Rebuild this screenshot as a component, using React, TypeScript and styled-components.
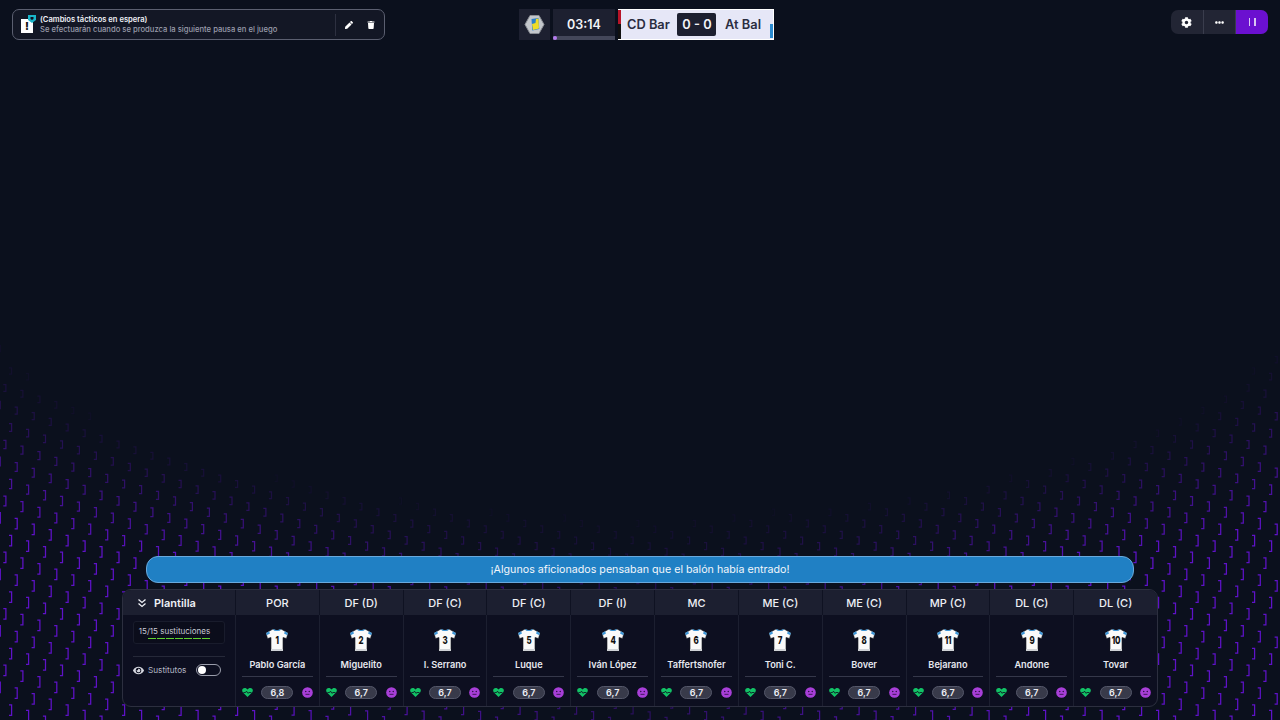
import React from 'react';
import styled, { createGlobalStyle } from 'styled-components';
import { FaCog, FaEllipsisH, FaEye, FaPen, FaTrash } from 'react-icons/fa';

const GlobalStyle = createGlobalStyle`
  html, body {
    margin: 0;
    padding: 0;
    height: 100%;
    background: #0b101d;
    overflow: hidden;
  }
  body, button {
    font-family: Inter, "Liberation Sans", sans-serif;
  }
`;

const Page = styled.div`
  position: relative;
  width: 1280px;
  height: 720px;
  display: flex;
  flex-direction: column;
  justify-content: space-between;
  background: #0b101d;
  color: #eceef4;
  overflow: hidden;
`;

const PatternLayer = styled.svg`
  position: absolute;
  inset: 0;
  width: 100%;
  height: 100%;
`;

const TopBar = styled.header`
  position: relative;
  display: grid;
  grid-template-columns: 507px 255px 1fr;
  align-items: start;
  padding: 9px 12px 0;
`;

const Notice = styled.div`
  width: 373px;
  height: 31px;
  box-sizing: border-box;
  display: flex;
  align-items: center;
  border: 1px solid #5b5f70;
  border-radius: 7px;
  background: #131725;
  padding: 0 0 0 8px;
`;

const NoticeIcon = styled.div`
  position: relative;
  flex: none;
  width: 12px;
  height: 14px;
  margin-top: 2px;
  margin-right: 7px;
  background: #fff;
  color: #111;
  font-size: 11px;
  line-height: 14px;
  font-weight: 800;
  text-align: center;
`;

const NoticeBadge = styled.svg`
  position: absolute;
  top: -4px;
  right: -3px;
  width: 8px;
  height: 8px;
`;

const NoticeText = styled.div`
  flex: 1;
  display: flex;
  flex-direction: column;
`;

const NoticeTitle = styled.div`
  font-size: 7.6px;
  line-height: 10px;
  font-weight: 600;
  color: #f0f1f6;
`;

const NoticeSub = styled.div`
  font-size: 7.65px;
  line-height: 10px;
  font-weight: 500;
  color: #9a9dab;
`;

const NoticeActions = styled.div`
  display: flex;
  align-items: center;
  height: 22px;
  border-left: 1px solid #2d3040;
  gap: 14px;
  padding: 0 9px 0 9px;
  color: #fff;
  font-size: 8px;
`;

const Score = styled.div`
  display: flex;
  height: 31px;
  gap: 3px;
`;

const LogoBox = styled.div`
  width: 31px;
  display: flex;
  align-items: center;
  justify-content: center;
  background: #1d2030;
`;

const ClockBox = styled.div`
  position: relative;
  width: 62px;
  display: flex;
  align-items: center;
  justify-content: center;
  padding-bottom: 1px;
  box-sizing: border-box;
  background: #1d2030;
  font-size: 12.5px;
  font-weight: 600;
  color: #f2f3f8;
`;

const ClockTrack = styled.div`
  position: absolute;
  left: 0;
  right: 0;
  bottom: 0;
  height: 4px;
  background: #44475a;
`;

const ClockThumb = styled.div`
  width: 4px;
  height: 4px;
  border-radius: 50%;
  background: #b57bf0;
`;

const Teams = styled.div`
  position: relative;
  flex: 1;
  display: flex;
  align-items: center;
  justify-content: space-between;
  padding: 0 12px 0 9px;
  background: #e6e7f7;
  color: #2a2d40;
  font-size: 12.8px;
  font-weight: 600;
  border: 1px solid #fff;
  border-left: 0;
  box-sizing: border-box;
`;

const TeamStripe = styled.div<{ $side: 'left' | 'right' }>`
  position: absolute;
  ${p => (p.$side === 'left'
    ? 'left: 0; top: 0; bottom: 0; width: 3px; background: linear-gradient(#b81428 0 50%, #111 50%);'
    : 'right: 0; bottom: 1px; width: 3px; height: 14px; background: #2a8ad0;')}
`;

const ScoreBox = styled.div`
  width: 39px;
  height: 23px;
  margin-left: -1px;
  display: flex;
  align-items: center;
  justify-content: center;
  background: #1d2030;
  color: #f2f3f8;
  border-radius: 2px;
`;

const Controls = styled.div`
  justify-self: end;
  display: flex;
  height: 24px;
  margin-top: 1px;
  border-radius: 7px;
  overflow: hidden;
  background: #222534;
`;

const ControlButton = styled.button<{ $primary?: boolean }>`
  width: ${p => (p.$primary ? '32px' : '32.5px')};
  padding: 0;
  border: 0;
  border-right: ${p => (p.$primary ? '0' : '1px solid #3a3d4d')};
  display: flex;
  align-items: center;
  justify-content: center;
  gap: 4px;
  color: #fff;
  font-size: 11px;
  background: ${p => (p.$primary ? '#6b10d0' : 'transparent')};
`;

const PauseBar = styled.span`
  width: 1.5px;
  height: 8px;
  background: #d9c6f2;
`;

const Bottom = styled.footer`
  position: relative;
  display: flex;
  flex-direction: column;
  align-items: center;
  gap: 6px;
  padding-bottom: 13px;
`;

const Message = styled.div`
  width: 988px;
  height: 27px;
  box-sizing: border-box;
  display: flex;
  align-items: center;
  justify-content: center;
  border: 1px solid #69a9dc;
  border-radius: 12px;
  background: #2080c4;
  color: #f2f6fb;
  font-size: 10.7px;
`;

const Panel = styled.section`
  width: 1036px;
  height: 118px;
  box-sizing: border-box;
  display: grid;
  grid-template-columns: 112px repeat(11, 1fr);
  grid-template-rows: 25px 1fr;
  border: 1px solid #2c2f3f;
  border-radius: 9px;
  background: #0d0f20;
  overflow: hidden;
`;

const HeaderCell = styled.div`
  display: flex;
  align-items: center;
  justify-content: center;
  background: #1c1f30;
  border-left: 1px solid #0f1222;
  font-size: 11px;
  font-weight: 500;
  color: #eef0f6;
`;

const SquadHeader = styled(HeaderCell)`
  justify-content: flex-start;
  gap: 7px;
  padding-left: 14px;
  border-left: 0;
  font-weight: 600;
`;

const Side = styled.div`
  display: flex;
  flex-direction: column;
  padding: 6px 10px 0;
`;

const SubsBox = styled.div`
  height: 21px;
  display: flex;
  flex-direction: column;
  align-items: center;
  justify-content: center;
  gap: 2px;
  border: 1px solid #191c2c;
  border-radius: 3px;
  background: #0b0d1b;
  font-size: 8px;
  color: #c9cbd5;
`;

const SubsLabel = styled.span`
  margin-right: 9px;
`;

const SubDashes = styled.div`
  display: flex;
  gap: 1.2px;
`;

const SubDash = styled.span`
  width: 7.9px;
  height: 1px;
  background: #5fd431;
`;

const SideDivider = styled.div`
  height: 1px;
  margin-top: 12px;
  background: #262939;
`;

const SubsRow = styled.div`
  display: flex;
  align-items: center;
  height: 26px;
  font-size: 8.2px;
  color: #b4b7c4;
  gap: 4px;
`;

const EyeIcon = styled(FaEye)`
  font-size: 11px;
  color: #d6d8e0;
`;

const Toggle = styled.div`
  margin-left: auto;
  margin-right: 4px;
  box-sizing: border-box;
  width: 25px;
  height: 12px;
  display: flex;
  align-items: center;
  padding-left: 1px;
  border: 1px solid #9a9dab;
  border-radius: 6px;
`;

const ToggleKnob = styled.span`
  width: 8px;
  height: 8px;
  border-radius: 50%;
  background: #fff;
`;

const PlayerCell = styled.div`
  display: flex;
  flex-direction: column;
  align-items: center;
  padding: 13px 6px 0;
  border-left: 1px solid #1c1f30;
`;

const ShirtWrap = styled.div`
  position: relative;
  width: 24px;
  height: 24px;
  display: flex;
  justify-content: center;
`;

const ShirtNumber = styled.span`
  position: absolute;
  top: 6px;
  left: 0;
  right: 0;
  text-align: center;
  font-size: 11px;
  line-height: 13px;
  font-weight: 800;
  color: #111;
  letter-spacing: -0.4px;
  transform: scaleX(0.72);
`;

const PlayerName = styled.div`
  margin-top: 7px;
  font-size: 9.2px;
  line-height: 12px;
  font-weight: 600;
  color: #e6e8ef;
  white-space: nowrap;
`;

const NameRule = styled.div`
  align-self: stretch;
  height: 1px;
  margin-top: 5px;
  background: #35384a;
`;

const Stats = styled.div`
  align-self: stretch;
  display: flex;
  align-items: center;
  justify-content: space-between;
  margin-top: 9px;
`;

const Rating = styled.div`
  width: 32px;
  height: 13px;
  box-sizing: border-box;
  display: flex;
  align-items: center;
  justify-content: center;
  border: 1px solid #55586a;
  border-radius: 7px;
  background: #383a4a;
  font-size: 9px;
  font-weight: 600;
  color: #eceef4;
`;

interface Player {
  position: string;
  number: number;
  name: string;
  rating: string;
}

const players: Player[] = [
  { position: 'POR', number: 1, name: 'Pablo García', rating: '6,8' },
  { position: 'DF (D)', number: 2, name: 'Miguelito', rating: '6,7' },
  { position: 'DF (C)', number: 3, name: 'I. Serrano', rating: '6,7' },
  { position: 'DF (C)', number: 5, name: 'Luque', rating: '6,7' },
  { position: 'DF (I)', number: 4, name: 'Iván López', rating: '6,7' },
  { position: 'MC', number: 6, name: 'Taffertshofer', rating: '6,7' },
  { position: 'ME (C)', number: 7, name: 'Toni C.', rating: '6,7' },
  { position: 'ME (C)', number: 8, name: 'Bover', rating: '6,7' },
  { position: 'MP (C)', number: 11, name: 'Bejarano', rating: '6,7' },
  { position: 'DL (C)', number: 9, name: 'Andone', rating: '6,7' },
  { position: 'DL (C)', number: 10, name: 'Tovar', rating: '6,7' },
];

// the bracket field: a square lattice turned about 18 degrees, brighter away from the upper middle
const brackets = (() => {
  const out: { x: number; y: number; o: number; h: number }[] = [];
  const k = 5.65;
  for (let i = -30; i < 120; i++) {
    for (let j = -120; j < 60; j++) {
      const x = 11 + (i * 3 + j) * k;
      const y = 484 + (i - j * 3) * k;
      if (x < -4 || x > 1284 || y < 340 || y > 724) continue;
      const dx = Math.abs(x - 640) / 640;
      const dy = (y - 300) / 223;
      const d = Math.sqrt(dx * dx * 0.889 + dy * dy);
      const o = Math.min(1, Math.max(0, (d - 0.94) / 0.42)) * (0.35 + 0.65 * Math.min(1, dx * 1.6));
      if (o <= 0.04) continue;
      out.push({ x, y, o, h: 6 + o * 4.5 });
    }
  }
  return out;
})();

const BracketField = () => (
  <PatternLayer viewBox="0 0 1280 720">
    {brackets.map((b, i) => (
      <path
        key={i}
        d={`M${(b.x - 2).toFixed(1)} ${(b.y - b.h / 2).toFixed(1)}h2.6v${b.h.toFixed(1)}h-2.6`}
        fill="none"
        stroke="#5f12c8"
        strokeWidth="1.25"
        opacity={b.o.toFixed(2)}
      />
    ))}
  </PatternLayer>
);

const ClubBadge = () => (
  <svg width="21" height="21" viewBox="0 0 21 21">
    <path d="M6 1.500h9l5 9-5 9H6l-5-9z" fill="#c4c7cc" stroke="#8b8e95" strokeLinejoin="round" />
    <path d="M7.500 5l7-1 .8 11-7 1.500z" fill="#2a7fc8" />
    <path d="M8 10l3.500-1 .5-4 2.500-.5.5 10-6 1.500z" fill="#f0dc24" />
  </svg>
);

const Shirt = () => (
  <svg width="24" height="24" viewBox="0 0 24 24">
    <path d="M8 1L1 5l1.500 5.500 3.500-1V23h12V9.500l3.500 1L23 5l-7-4c-1 1.500-7 1.500-8 0z" fill="#fafafa" stroke="#16181f" strokeWidth="0.6" />
    <path d="M1.200 5L4 3.300l1 2.200-3.300 1.700zM22.800 5L20 3.300l-1 2.200 3.300 1.700z" fill="#3d96d8" />
    <path d="M9 1c1 1.400 5 1.400 6 0l1 .6c-1.500 2-6.500 2-8 0z" fill="#3d96d8" />
    <path d="M6 21h12v2H6z" fill="#cfd2d6" />
  </svg>
);

const Heart = () => (
  <svg width="11" height="11" viewBox="0 0 12 11">
    <path d="M6 10.500L.8 5.200C-.6 3.400.4.600 3 .600c1.300 0 2.300.7 3 1.700.7-1 1.700-1.700 3-1.700 2.600 0 3.600 2.800 2.200 4.600z" fill="#12c266" />
    <path d="M1.500 5.500h2.400l1-1.500 1.600 2.500 1-1h2.800" fill="none" stroke="#0d1020" strokeWidth="0.9" />
  </svg>
);

const Mood = () => (
  <svg width="11" height="11" viewBox="0 0 12 12">
    <circle cx="6" cy="6" r="5.800" fill="#a83fd8" />
    <circle cx="4.100" cy="4.800" r=".8" fill="#2a1040" />
    <circle cx="7.900" cy="4.800" r=".8" fill="#2a1040" />
    <path d="M3.800 8h4.400" stroke="#2a1040" strokeWidth=".9" />
  </svg>
);

const Chevrons = () => (
  <svg width="10" height="10" viewBox="0 0 10 10" fill="none" stroke="#eef0f6" strokeWidth="1.300">
    <path d="M1.500 1.500L5 4.500l3.500-3M1.500 5.500L5 8.500l3.500-3" />
  </svg>
);

const App: React.FC = () => (
  <Page>
    <GlobalStyle />
    <BracketField />
    <TopBar>
      <Notice>
        <NoticeIcon>
          !
          <NoticeBadge viewBox="0 0 8 8">
            <path d="M0 0h8v5L4 8 0 5z" fill="#19b5c9" />
            <path d="M2.500 2h3v2L4 5 2.500 4z" fill="#0d1020" />
          </NoticeBadge>
        </NoticeIcon>
        <NoticeText>
          <NoticeTitle>(Cambios tácticos en espera)</NoticeTitle>
          <NoticeSub>Se efectuarán cuando se produzca la siguiente pausa en el juego</NoticeSub>
        </NoticeText>
        <NoticeActions>
          <FaPen />
          <FaTrash />
        </NoticeActions>
      </Notice>
      <Score>
        <LogoBox><ClubBadge /></LogoBox>
        <ClockBox>
          03:14
          <ClockTrack><ClockThumb /></ClockTrack>
        </ClockBox>
        <Teams>
          <TeamStripe $side="left" />
          <span>CD Bar</span>
          <ScoreBox>0 - 0</ScoreBox>
          <span>At Bal</span>
          <TeamStripe $side="right" />
        </Teams>
      </Score>
      <Controls>
        <ControlButton><FaCog /></ControlButton>
        <ControlButton><FaEllipsisH size={9} /></ControlButton>
        <ControlButton $primary><PauseBar /><PauseBar /></ControlButton>
      </Controls>
    </TopBar>
    <Bottom>
      <Message>¡Algunos aficionados pensaban que el balón había entrado!</Message>
      <Panel>
        <SquadHeader><Chevrons />Plantilla</SquadHeader>
        {players.map((p, i) => <HeaderCell key={i}>{p.position}</HeaderCell>)}
        <Side>
          <SubsBox>
            <SubsLabel>15/15 sustituciones</SubsLabel>
            <SubDashes>
              {Array.from({ length: 7 }, (_, i) => <SubDash key={i} />)}
            </SubDashes>
          </SubsBox>
          <SideDivider />
          <SubsRow>
            <EyeIcon />
            Sustitutos
            <Toggle><ToggleKnob /></Toggle>
          </SubsRow>
        </Side>
        {players.map((p, i) => (
          <PlayerCell key={i}>
            <ShirtWrap>
              <Shirt />
              <ShirtNumber>{p.number}</ShirtNumber>
            </ShirtWrap>
            <PlayerName>{p.name}</PlayerName>
            <NameRule />
            <Stats>
              <Heart />
              <Rating>{p.rating}</Rating>
              <Mood />
            </Stats>
          </PlayerCell>
        ))}
      </Panel>
    </Bottom>
  </Page>
);

export default App;
